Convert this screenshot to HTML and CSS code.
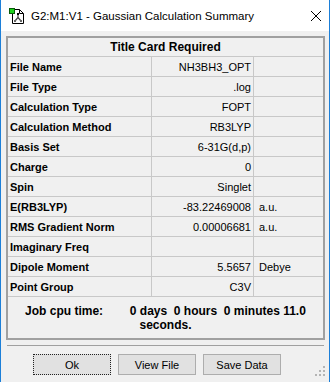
FILE: index.html
```html
<!DOCTYPE html>
<html>
<head>
  <meta charset="UTF-8">
  <title>Gaussian Calculation Summary</title>
  <link rel="stylesheet" href="styles.css">
</head>
<body>
  <div class="window">
    <div class="titlebar">
      <svg class="app-icon" width="16" height="16" viewBox="0 0 16 16">
        <path d="M3.5 1.5 H10.5 L14.5 5.5 V15.5 H3.5 Z" fill="#fff" stroke="#000"/>
        <path d="M10.5 1.5 V5.5 H14.5" fill="none" stroke="#000"/>
        <path d="M9 6 V9.5 L6 13 M9 9.5 L12 13" fill="none" stroke="#444" stroke-width="1.2"/>
        <rect x="8" y="5" width="2" height="2" fill="#000"/>
        <rect x="5" y="12" width="2" height="2" fill="#666"/>
        <rect x="11" y="12" width="2" height="2" fill="#666"/>
        <rect x="0.5" y="0.5" width="5" height="5" fill="#1fd31f" stroke="#0a5a0a"/>
      </svg>
      <span class="title">G2:M1:V1 - Gaussian Calculation Summary</span>
      <svg class="close" width="10" height="10" viewBox="0 0 10 10">
        <path d="M0 0 L10 10 M10 0 L0 10" stroke="#000" stroke-width="1"/>
      </svg>
    </div>

    <div class="client">
      <div class="summary">
        <div class="cell head">Title Card Required</div>

        <div class="cell label">File Name</div>
        <div class="cell value">NH3BH3_OPT</div>
        <div class="cell unit"></div>

        <div class="cell label">File Type</div>
        <div class="cell value">.log</div>
        <div class="cell unit"></div>

        <div class="cell label">Calculation Type</div>
        <div class="cell value">FOPT</div>
        <div class="cell unit"></div>

        <div class="cell label">Calculation Method</div>
        <div class="cell value">RB3LYP</div>
        <div class="cell unit"></div>

        <div class="cell label">Basis Set</div>
        <div class="cell value">6-31G(d,p)</div>
        <div class="cell unit"></div>

        <div class="cell label">Charge</div>
        <div class="cell value">0</div>
        <div class="cell unit"></div>

        <div class="cell label">Spin</div>
        <div class="cell value">Singlet</div>
        <div class="cell unit"></div>

        <div class="cell label">E(RB3LYP)</div>
        <div class="cell value">-83.22469008</div>
        <div class="cell unit">a.u.</div>

        <div class="cell label">RMS Gradient Norm</div>
        <div class="cell value">0.00006681</div>
        <div class="cell unit">a.u.</div>

        <div class="cell label">Imaginary Freq</div>
        <div class="cell value"></div>
        <div class="cell unit"></div>

        <div class="cell label">Dipole Moment</div>
        <div class="cell value">5.5657</div>
        <div class="cell unit">Debye</div>

        <div class="cell label">Point Group</div>
        <div class="cell value">C3V</div>
        <div class="cell unit"></div>

        <div class="cell cpu">Job cpu time:&nbsp;&nbsp;&nbsp;&nbsp;&nbsp;&nbsp;&nbsp; 0&nbsp;days&nbsp;&nbsp;0&nbsp;hours&nbsp;&nbsp;0&nbsp;minutes&nbsp;11.0 seconds.</div>
      </div>

      <div class="separator"></div>

      <div class="buttons">
        <button class="btn default">Ok</button>
        <button class="btn">View File</button>
        <button class="btn">Save Data</button>
      </div>

      <svg class="grip" width="11" height="11" viewBox="0 0 11 11">
        <rect x="8" y="0" width="2" height="2" fill="#b4b4b4"/>
        <rect x="4" y="4" width="2" height="2" fill="#b4b4b4"/>
        <rect x="8" y="4" width="2" height="2" fill="#b4b4b4"/>
        <rect x="0" y="8" width="2" height="2" fill="#b4b4b4"/>
        <rect x="4" y="8" width="2" height="2" fill="#b4b4b4"/>
        <rect x="8" y="8" width="2" height="2" fill="#b4b4b4"/>
      </svg>
    </div>
  </div>
</body>
</html>
```

FILE: styles.css
```css
body {
  margin: 0;
  background: #fff;
  font-family: "Liberation Sans", Arial, sans-serif;
  font-size: 11px;
  color: #000;
}

.window {
  width: 328px;
  height: 382px;
  border-left: 1px solid #1c7fd8;
  border-right: 1px solid #1c7fd8;
  display: flex;
  flex-direction: column;
  overflow: hidden;
}

.titlebar {
  height: 31px;
  background: #fff;
  display: flex;
  align-items: center;
  padding-left: 8px;
}

.app-icon {
  flex: none;
}

.title {
  margin-left: 6px;
  font-size: 11.5px;
  color: #000;
}

.close {
  margin-left: auto;
  margin-right: 8px;
}

.client {
  flex: 1;
  background: #f0f0f0;
  position: relative;
  padding-top: 5px;
}

.summary {
  margin-left: 5px;
  width: 315px;
  border: 2px solid #a0a0a0;
  display: grid;
  grid-template-columns: 143px 101px 69px;
  grid-template-rows: 18px repeat(12, 19px) 41px;
  gap: 1px;
  background: #c8c8c8;
}

.cell {
  background: #f0f0f0;
  display: flex;
  align-items: center;
  white-space: nowrap;
}

.head {
  grid-column: 1 / 4;
  justify-content: center;
  font-weight: bold;
  font-size: 12px;
}

.label {
  padding-left: 2px;
  font-weight: bold;
}

.value {
  justify-content: flex-end;
  padding-right: 2px;
}

.unit {
  padding-left: 5px;
}

.cpu {
  grid-column: 1 / 4;
  justify-content: center;
  text-align: center;
  white-space: normal;
  font-weight: bold;
  font-size: 12px;
  line-height: 14px;
  padding: 0 8px;
}

.separator {
  margin: 5px 0 0 6px;
  width: 317px;
  height: 1px;
  background: #a0a0a0;
}

.buttons {
  display: flex;
  gap: 7px;
  margin-top: 8px;
  padding-left: 32px;
}

.btn {
  width: 78px;
  height: 21px;
  padding: 0;
  background: #e1e1e1;
  border: 1px solid #adadad;
  font-family: "Liberation Sans", Arial, sans-serif;
  font-size: 11px;
  color: #000;
}

.btn.default {
  border: 1px dotted #222;
}

.grip {
  position: absolute;
  right: 3px;
  bottom: 5px;
}
```
